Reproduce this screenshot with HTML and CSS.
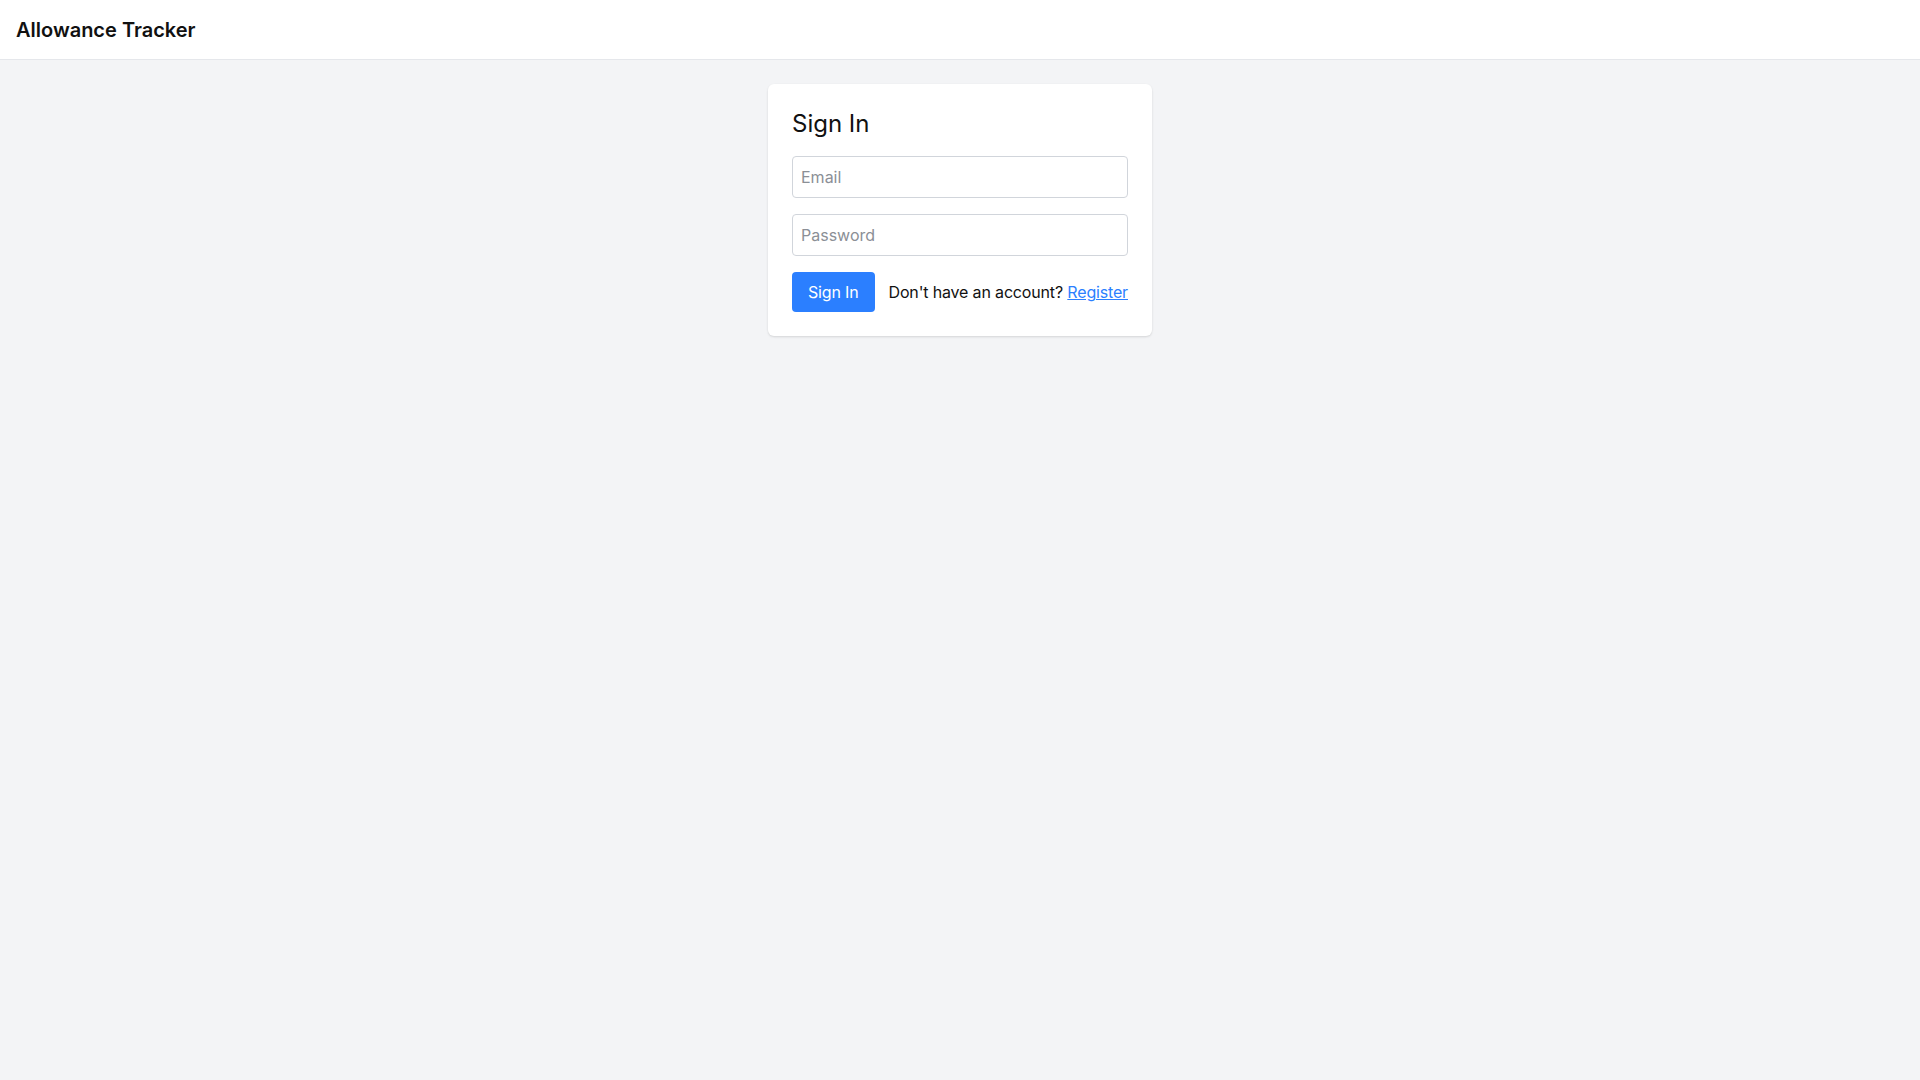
FILE: index.html
```html
<!DOCTYPE html>
<html lang="en">
<head>
<meta charset="utf-8">
<title>Allowance Tracker</title>
<link rel="stylesheet" href="styles.css">
</head>
<body>
<header class="topbar">
  <div class="brand">Allowance Tracker</div>
</header>
<main class="main">
  <div class="card">
    <h1 class="card-title">Sign In</h1>
    <form class="form">
      <input class="input" type="email" placeholder="Email">
      <input class="input" type="password" placeholder="Password">
      <div class="actions">
        <button class="btn" type="button">Sign In</button>
        <p class="hint">Don't have an account? <a class="link" href="#">Register</a></p>
      </div>
    </form>
  </div>
</main>
</body>
</html>
```
FILE: styles.css
```css
* { box-sizing: border-box; }
html, body { margin: 0; padding: 0; }
body {
  font-family: Inter, "Noto Sans", sans-serif;
  background: #f3f4f6;
  color: #111;
  min-height: 100vh;
}
.topbar {
  height: 60px;
  background: #fff;
  border-bottom: 1px solid #e5e7eb;
  display: flex;
  align-items: center;
  padding: 0 16px;
}
.brand {
  font-size: 20px;
  font-weight: 600;
  color: #111;
}
.main {
  padding-top: 24px;
  display: flex;
  justify-content: center;
}
.card {
  width: 384px;
  background: #fff;
  border-radius: 6px;
  padding: 24px;
  box-shadow: 0 1px 2px rgba(0,0,0,0.08), 0 1px 3px rgba(0,0,0,0.06);
}
.card-title {
  margin: 0 0 16px;
  font-size: 24px;
  line-height: 32px;
  font-weight: 400;
  color: #111;
}
.form {
  display: flex;
  flex-direction: column;
  gap: 16px;
}
.input {
  width: 100%;
  height: 42px;
  padding: 8px;
  font-family: inherit;
  font-size: 16px;
  line-height: 24px;
  border: 1px solid #d1d5db;
  border-radius: 4px;
  color: #111;
  background: #fff;
}
.input::placeholder { color: #8b8f96; }
.actions {
  display: flex;
  align-items: center;
  justify-content: space-between;
}
.btn {
  height: 40px;
  padding: 0 16px;
  background: #2b7fff;
  color: #fff;
  border: none;
  border-radius: 4px;
  font-family: inherit;
  font-size: 16px;
  letter-spacing: -0.16px;
}
.hint {
  margin: 0;
  font-size: 16px;
  letter-spacing: -0.16px;
  color: #111;
}
.link {
  color: #2b7fff;
  text-decoration: underline;
}
```
